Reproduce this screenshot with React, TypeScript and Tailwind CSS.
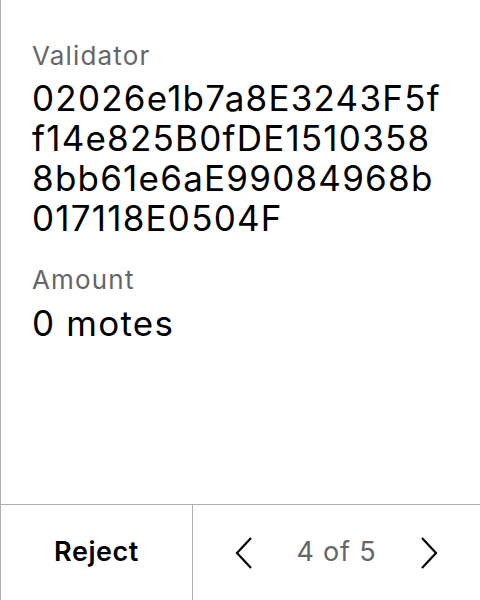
export default function App() {
  return (
    <div
      className="flex h-[600px] w-[480px] flex-col border-l border-[#b0b0b0] bg-white text-black"
      style={{ fontFamily: "Inter, 'Noto Sans', sans-serif" }}
    >
      <div className="flex flex-1 flex-col pl-[31px] pr-[10px] pt-[40px]">
        <div className="text-[26px] leading-[32px] tracking-[0.045em] text-[#666666]">Validator</div>
        <div className="mt-[6px] whitespace-nowrap text-[35px] leading-[40px] tracking-[0.035em]">
          02026e1b7a8E3243F5f
          <br />
          f14e825B0fDE1510358
          <br />
          8bb61e6aE99084968b
          <br />
          017118E0504F
        </div>
        <div className="mt-[26px] text-[26px] leading-[32px] tracking-[0.045em] text-[#666666]">Amount</div>
        <div className="mt-[7px] text-[35px] leading-[40px] tracking-[0.035em]">0 motes</div>
      </div>
      <div className="flex h-[96px] border-t border-[#b0b0b0]">
        <button className="flex w-[192px] items-center justify-center border-r border-[#b0b0b0] text-[27px] font-semibold tracking-[0.02em]">
          Reject
        </button>
        <div className="flex flex-1 items-center justify-between px-[40px]">
          <svg width="22" height="34" viewBox="0 0 22 34" fill="none" stroke="black" strokeWidth="2.2">
            <path d="M18 2 L4 17 L18 32" />
          </svg>
          <span className="text-[27px] tracking-[0.03em] text-[#666666]">4 of 5</span>
          <svg width="22" height="34" viewBox="0 0 22 34" fill="none" stroke="black" strokeWidth="2.2">
            <path d="M4 2 L18 17 L4 32" />
          </svg>
        </div>
      </div>
    </div>
  );
}
